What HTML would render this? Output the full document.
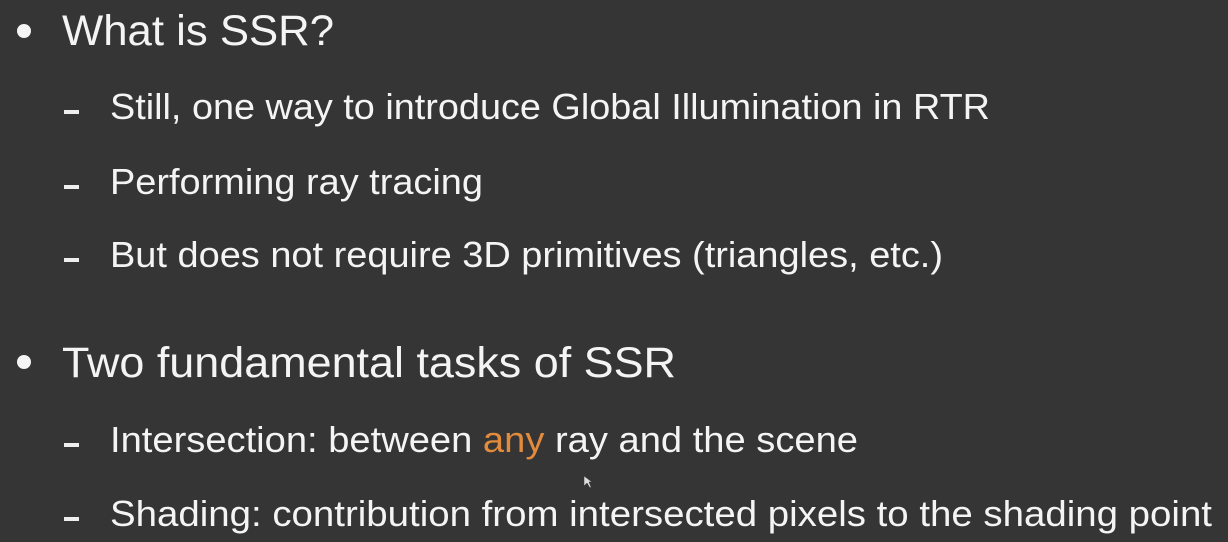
<!DOCTYPE html>
<html><head><meta charset="utf-8"><style>
html,body{margin:0;padding:0;background:#353535;width:1228px;height:542px;overflow:hidden}
svg{display:block}
text{font-family:"Liberation Sans",sans-serif;fill:#f4f4f4}
.h{font-size:43px}
.s{font-size:36px}
</style></head><body>
<svg width="1228" height="542" viewBox="0 0 1228 542">
<rect width="1228" height="542" fill="#353535"/>
<circle cx="24" cy="31" r="7" fill="#f4f4f4"/>
<circle cx="24" cy="362" r="7" fill="#f4f4f4"/>
<text class="h" x="62" y="45" textLength="272" lengthAdjust="spacingAndGlyphs">What is SSR?</text>
<text class="h" x="62" y="377" textLength="614" lengthAdjust="spacingAndGlyphs">Two fundamental tasks of SSR</text>
<rect x="64" y="110" width="15" height="4" fill="#eee"/>
<rect x="64" y="185" width="15" height="4" fill="#eee"/>
<rect x="64" y="258" width="15" height="4" fill="#eee"/>
<rect x="64" y="443" width="15" height="4" fill="#eee"/>
<rect x="64" y="517" width="15" height="4" fill="#eee"/>
<text class="s" x="110" y="119" textLength="880" lengthAdjust="spacingAndGlyphs">Still, one way to introduce Global Illumination in RTR</text>
<text class="s" x="110" y="194" textLength="373" lengthAdjust="spacingAndGlyphs">Performing ray tracing</text>
<text class="s" x="110" y="267" textLength="833" lengthAdjust="spacingAndGlyphs">But does not require 3D primitives (triangles, etc.)</text>
<text class="s" x="110" y="452" textLength="748" lengthAdjust="spacingAndGlyphs">Intersection: between <tspan fill="#e38b3c">any</tspan> ray and the scene</text>
<text class="s" x="110" y="526" textLength="1102" lengthAdjust="spacingAndGlyphs">Shading: contribution from intersected pixels to the shading point</text>
<path d="M584 476 L584 486 L587 483 L590 488 L591 487 L589 482 L592 482 Z" fill="#ddd" stroke="#333" stroke-width="0.5"/>
</svg>
</body></html>
